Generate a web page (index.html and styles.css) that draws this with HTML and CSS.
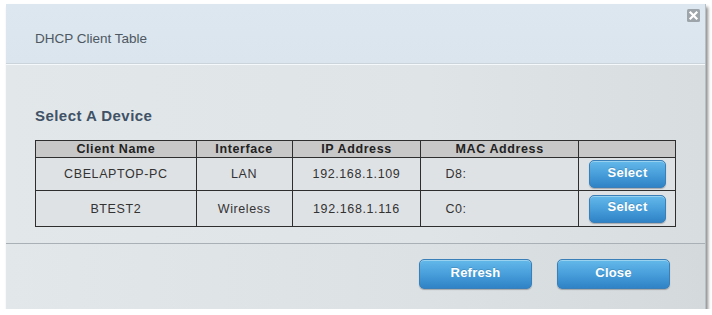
FILE: index.html
```html
<!DOCTYPE html>
<html>
<head>
<meta charset="utf-8">
<link rel="stylesheet" href="styles.css">
</head>
<body>
<div class="dialog">
  <div class="header">
    <div class="title">DHCP Client Table</div>
    <span class="close-x" aria-label="close">
      <svg width="13" height="13" viewBox="0 0 13 13"><rect x="0" y="0" width="13" height="13" rx="1.5" fill="#9da5aa"/><path d="M3.5 3.5 L9.5 9.5 M9.5 3.5 L3.5 9.5" stroke="#ffffff" stroke-width="2.2" stroke-linecap="square"/></svg>
    </span>
  </div>
  <div class="body">
    <div class="subtitle">Select A Device</div>
    <table class="clients">
      <colgroup>
        <col class="c1"><col class="c2"><col class="c3"><col class="c4"><col class="c5">
      </colgroup>
      <thead>
        <tr><th>Client Name</th><th>Interface</th><th>IP Address</th><th>MAC Address</th><th></th></tr>
      </thead>
      <tbody>
        <tr class="r1"><td>CBELAPTOP-PC</td><td>LAN</td><td>192.168.1.109</td><td class="mac">D8:</td><td class="act"><button class="btn sel">Select</button></td></tr>
        <tr class="r2"><td>BTEST2</td><td>Wireless</td><td>192.168.1.116</td><td class="mac">C0:</td><td class="act"><button class="btn sel">Select</button></td></tr>
      </tbody>
    </table>
  </div>
  <div class="footer">
    <button class="btn big">Refresh</button>
    <button class="btn big">Close</button>
  </div>
</div>
</body>
</html>
```
FILE: styles.css
```css
html, body {
  margin: 0;
  padding: 0;
  background: #ffffff;
}
body {
  font-family: "Liberation Sans", Arial, sans-serif;
  padding: 4px 0 0 6px;
}
.dialog {
  width: 700px;
  height: 305px;
  display: flex;
  flex-direction: column;
  box-shadow: 2px 3px 3px rgba(0, 0, 0, 0.45);
  border-right: 1px solid #b9c0c5;
  box-sizing: border-box;
}
.header {
  position: relative;
  height: 60px;
  box-sizing: border-box;
  padding: 27px 0 0 29px;
  background: linear-gradient(#dce7ef, #dae5ed);
  border-bottom: 1px solid #cbd4da;
}
.title {
  font-size: 13.5px;
  line-height: 16px;
  color: #4e5862;
}
.close-x {
  position: absolute;
  right: 5px;
  top: 5px;
  width: 13px;
  height: 13px;
  display: block;
}
.close-x svg { display: block; }
.body {
  height: 180px;
  box-sizing: border-box;
  border-top: 1px solid #f6f9fb;
  border-bottom: 1px solid #a9b1b7;
  padding: 42px 0 0 29px;
  background: linear-gradient(90deg, #e2e7ea 0%, #dfe4e7 60%, #d8dde0 100%);
}
.subtitle {
  font-size: 15px;
  font-weight: bold;
  line-height: 18px;
  letter-spacing: 0.45px;
  color: #3f5266;
  margin-bottom: 15px;
}
.clients {
  border-collapse: collapse;
  width: 641px;
  font-size: 12.5px;
  letter-spacing: 0.6px;
  color: #333;
}
.c1 { width: 161px; }
.c2 { width: 96px; }
.c3 { width: 129px; }
.c4 { width: 158px; }
.c5 { width: 96px; }
.clients th, .clients td {
  border: 1px solid #2e2e2e;
  padding: 0;
  text-align: center;
}
.clients th {
  background: #c8c8c8;
  height: 16px;
  font-weight: bold;
  color: #222;
  line-height: 15px;
}
.clients td {
  background: #dfe2e5;
}
.r1 td { height: 32px; }
.r2 td { height: 35px; }
.clients td.mac {
  text-align: left;
  padding-left: 24px;
}
.clients td.act {
  padding: 0 9px 0 10px;
}
.btn {
  font-family: "Liberation Sans", Arial, sans-serif;
  color: #ffffff;
  border: 1px solid #3a7fb8;
  border-radius: 5px;
  background: linear-gradient(#64b9ea 0%, #4aa1dc 45%, #2f83c6 100%);
  box-shadow: 0 1px 1px rgba(0, 0, 0, 0.25), inset 0 1px 0 rgba(255, 255, 255, 0.35);
  text-shadow: 0 -1px 0 rgba(0, 0, 0, 0.15);
  padding: 0;
  cursor: pointer;
}
.btn.sel {
  display: block;
  width: 77px;
  height: 28px;
  font-size: 13px;
  font-weight: bold;
  letter-spacing: 0.3px;
  padding-bottom: 4px;
}
.footer {
  flex: 1;
  display: flex;
  justify-content: flex-end;
  align-items: flex-start;
  gap: 25px;
  padding: 15px 35px 0 0;
  background: linear-gradient(90deg, #e2e7ea 0%, #dce1e4 60%, #d4d9dc 100%);
}
.btn.big {
  width: 113px;
  height: 30px;
  font-size: 13px;
  font-weight: bold;
  letter-spacing: 0.2px;
  padding-bottom: 3px;
}
```
